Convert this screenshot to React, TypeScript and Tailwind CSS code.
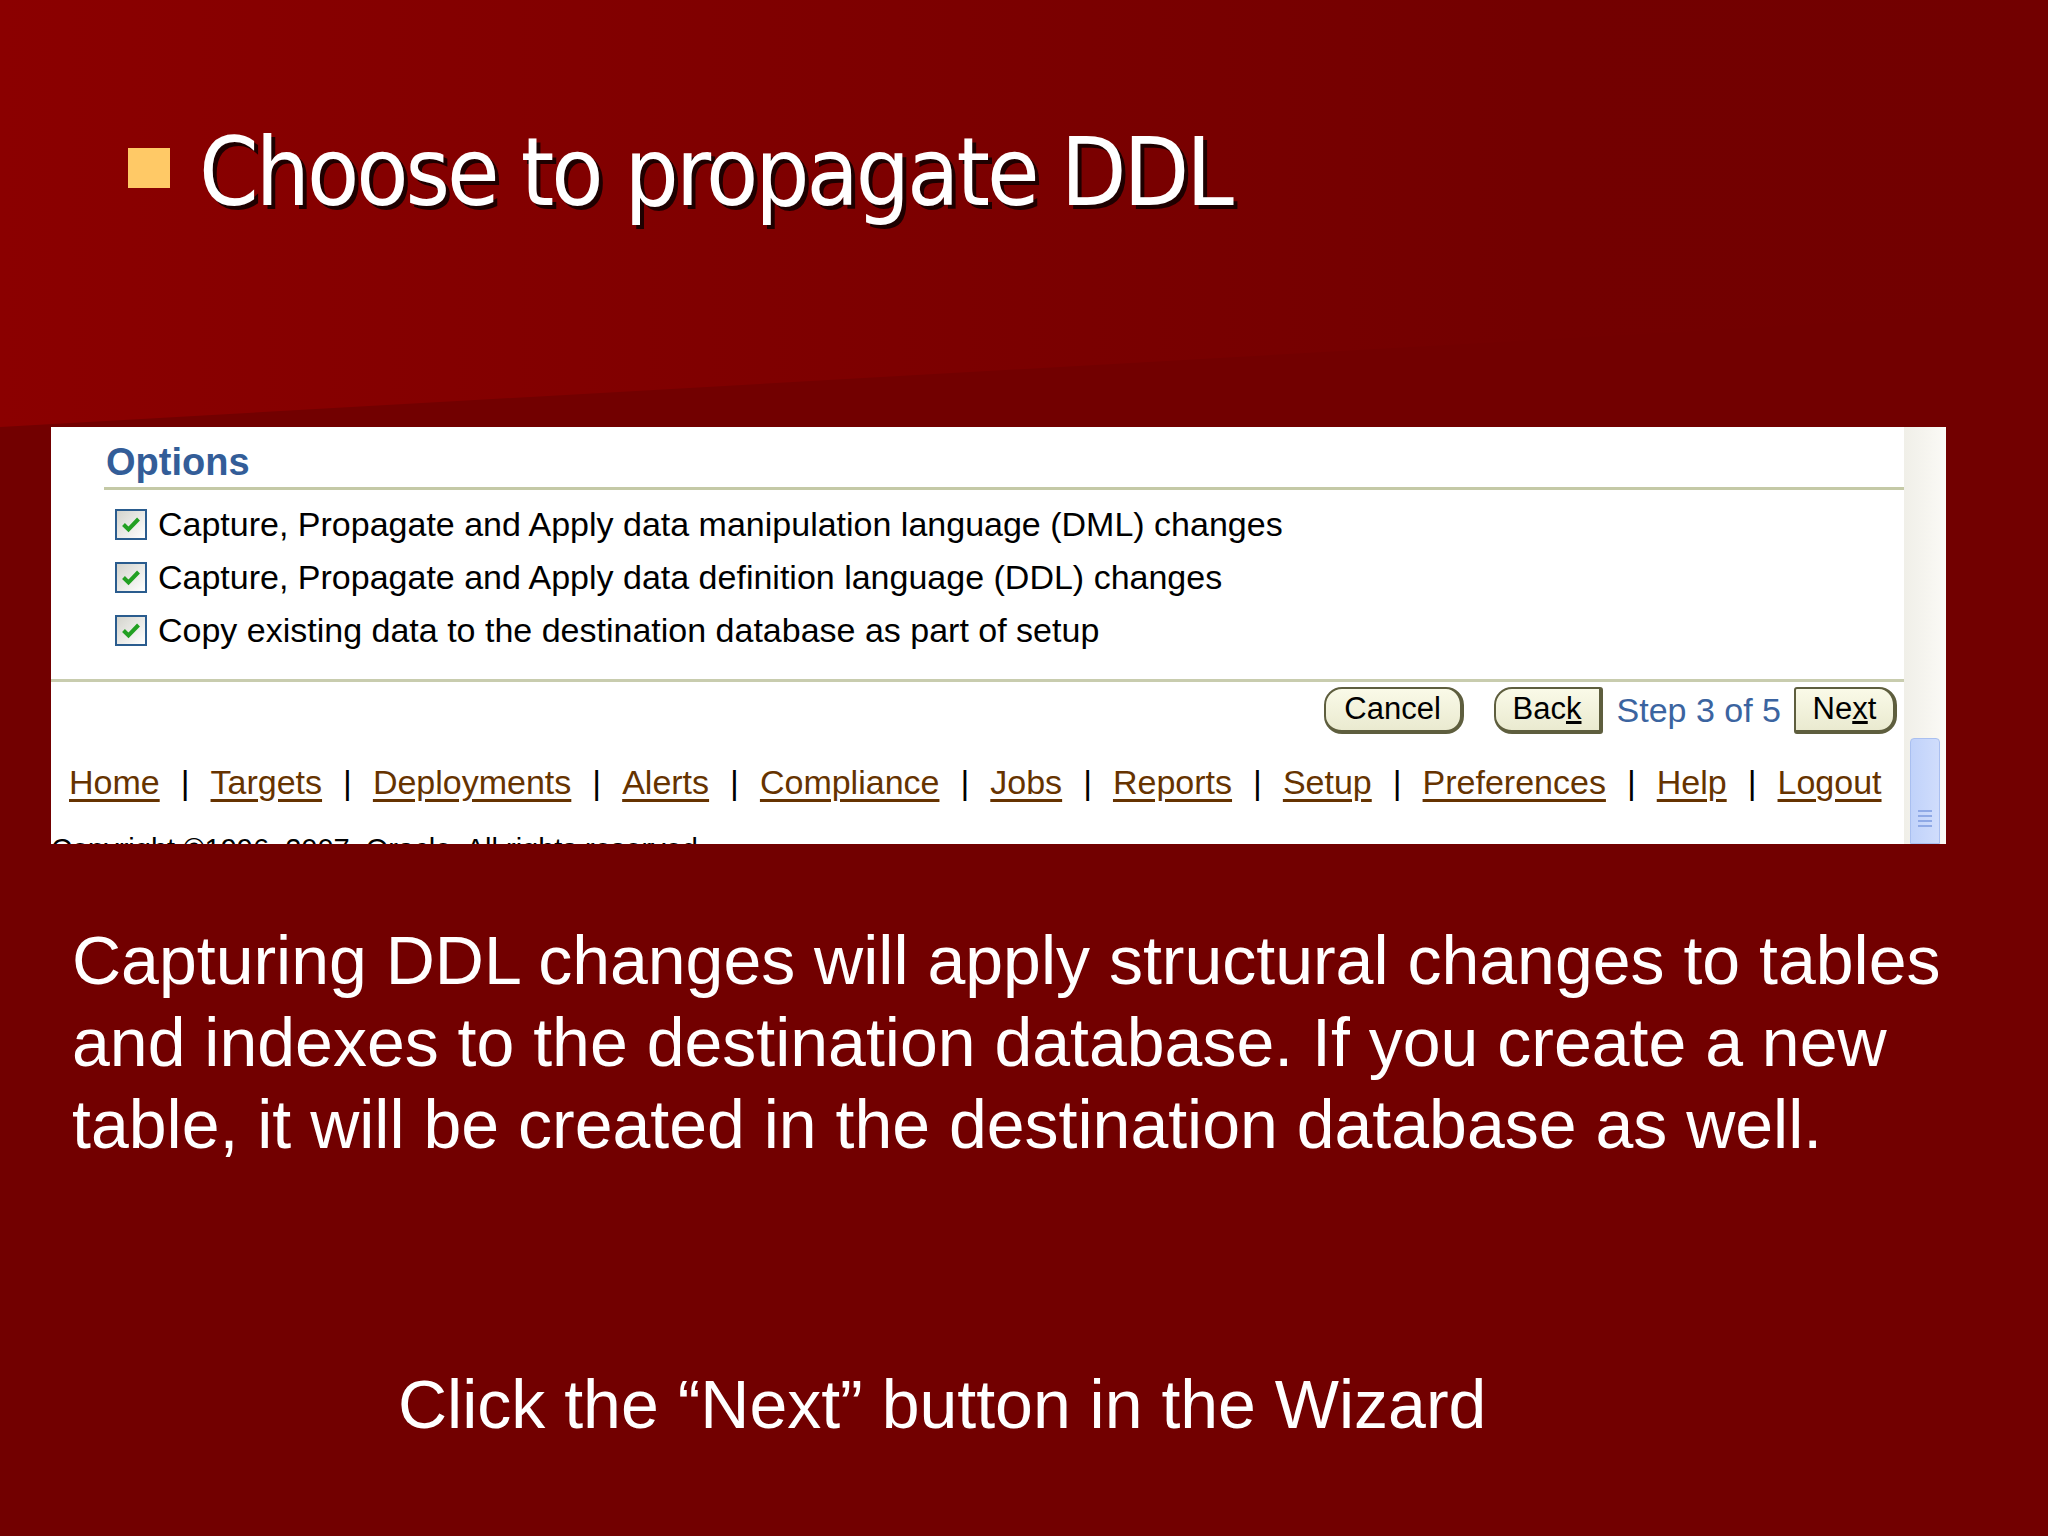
const links = [
  'Home',
  'Targets',
  'Deployments',
  'Alerts',
  'Compliance',
  'Jobs',
  'Reports',
  'Setup',
  'Preferences',
  'Help',
  'Logout',
]

const options = [
  'Capture, Propagate and Apply data manipulation language (DML) changes',
  'Capture, Propagate and Apply data definition language (DDL) changes',
  'Copy existing data to the destination database as part of setup',
]

function CheckBox() {
  return (
    <div className="w-[32px] h-[31px] border-2 border-[#2a5c8e] bg-gradient-to-br from-[#d4d4cd] to-white flex items-center justify-center shrink-0">
      <svg width="20" height="18" viewBox="0 0 20 18">
        <path d="M2.5 8.5 L7.5 13.5 L17.5 3" fill="none" stroke="#22a022" strokeWidth="4" />
      </svg>
    </div>
  )
}

export default function App() {
  return (
    <div className="relative w-[2048px] h-[1536px] overflow-hidden bg-[#720000] font-['Liberation_Sans',Arial,sans-serif]">
      {/* slide background */}
      <svg className="absolute inset-0" width="2048" height="1536" viewBox="0 0 2048 1536">
        <defs>
          <linearGradient id="top" x1="0" y1="0" x2="1" y2="0">
            <stop offset="0" stopColor="#8b0000" />
            <stop offset="0.75" stopColor="#730000" />
            <stop offset="1" stopColor="#720000" />
          </linearGradient>
        </defs>
        <polygon points="0,0 2048,0 2048,311 0,427" fill="url(#top)" />
      </svg>

      <div className="relative flex flex-col">
        {/* Title */}
        <div className="flex items-start pt-[125px] pl-[128px] gap-[29px]">
          <div className="w-[42px] h-[40px] mt-[23px] bg-[#ffc966] shrink-0" />
          <div className="text-[95px] leading-none text-white tracking-[-3px] font-['DejaVu_Sans_Condensed','DejaVu_Sans',sans-serif] [font-stretch:condensed] [text-shadow:4px_4px_0_#1e0000] whitespace-nowrap">
            Choose to propagate DDL
          </div>
        </div>

        {/* Screenshot */}
        <div className="mt-[207px] ml-[51px] w-[1895px] h-[417px] bg-white flex overflow-hidden">
          <div className="flex-1 flex flex-col">
            <div className="pl-[55px] pt-[13px] text-[38px] leading-[44px] font-bold text-[#335d98]">
              Options
            </div>
            <div className="ml-[53px] mt-[3px] border-t-[3px] border-[#c4c9a6]" />
            <div className="mt-[8px] flex flex-col">
              {options.map((o) => (
                <div key={o} className="h-[53px] flex items-center pl-[64px] gap-[11px]">
                  <CheckBox />
                  <span className="text-[34px] leading-[53px] text-black whitespace-nowrap">{o}</span>
                </div>
              ))}
            </div>
            <div className="mt-[22px] border-t-[3px] border-[#c8ccae]" />

            {/* Wizard buttons */}
            <div className="mt-[5px] h-[47px] flex items-center justify-end pr-[7px]">
              <div className="w-[140px] h-[47px] rounded-[18px] border-2 border-b-4 border-r-4 border-[#5e5e3e] bg-gradient-to-b from-[#fafae8] to-[#eaead0] flex items-center justify-center text-[31px] text-black">
                Cancel
              </div>
              <div className="ml-[30px] w-[109px] h-[47px] rounded-l-[18px] rounded-r-[3px] border-2 border-b-4 border-r-4 border-[#5e5e3e] bg-gradient-to-b from-[#fafae8] to-[#eaead0] flex items-center justify-center text-[31px] text-black">
                <span>
                  Bac<u>k</u>
                </span>
              </div>
              <div className="ml-[14px] text-[34px] text-[#3b64a0] whitespace-nowrap">Step 3 of 5</div>
              <div className="ml-[13px] w-[103px] h-[47px] rounded-l-[3px] rounded-r-[18px] border-2 border-b-4 border-r-4 border-[#5e5e3e] bg-gradient-to-b from-[#fafae8] to-[#eaead0] flex items-center justify-center text-[31px] text-black">
                <span>
                  Ne<u>x</u>t
                </span>
              </div>
            </div>

            {/* Global links */}
            <div className="mt-[28px] pl-[18px] flex items-center gap-[21px] text-[34px] leading-[40px] whitespace-nowrap">
              {links.map((l, i) => (
                <div key={l} className="flex items-center gap-[21px]">
                  {i > 0 && <span className="text-black">|</span>}
                  <span className="text-[#663300] underline underline-offset-[5px]">{l}</span>
                </div>
              ))}
            </div>

            <div className="mt-[31px] text-[29px] leading-[32px] text-black whitespace-nowrap">
              Copyright ©1996, 2007, Oracle. All rights reserved.
            </div>
          </div>

          {/* Scrollbar */}
          <div className="w-[42px] bg-gradient-to-r from-[#f0efe8] to-[#fbfaf6] flex flex-col justify-end">
            <div className="mx-[6px] h-[106px] rounded-t-[4px] border border-[#a9bff0] bg-gradient-to-r from-[#c0d2fa] to-[#d0ddfc] flex flex-col items-center justify-end pb-[16px] gap-[3px]">
              <div className="w-[14px] h-[2px] bg-[#8fa9e6]" />
              <div className="w-[14px] h-[2px] bg-[#8fa9e6]" />
              <div className="w-[14px] h-[2px] bg-[#8fa9e6]" />
              <div className="w-[14px] h-[2px] bg-[#8fa9e6]" />
            </div>
          </div>
        </div>

        {/* Notes */}
        <div className="mt-[75px] pl-[72px] text-[68px] leading-[82px] text-white whitespace-nowrap">
          Capturing DDL changes will apply structural changes to tables
          <br />
          and indexes to the destination database. If you create a new
          <br />
          table, it will be created in the destination database as well.
        </div>
        <div className="mt-[198px] pl-[398px] text-[68px] leading-[82px] text-white whitespace-nowrap">
          Click the “Next” button in the Wizard
        </div>
      </div>
    </div>
  )
}
